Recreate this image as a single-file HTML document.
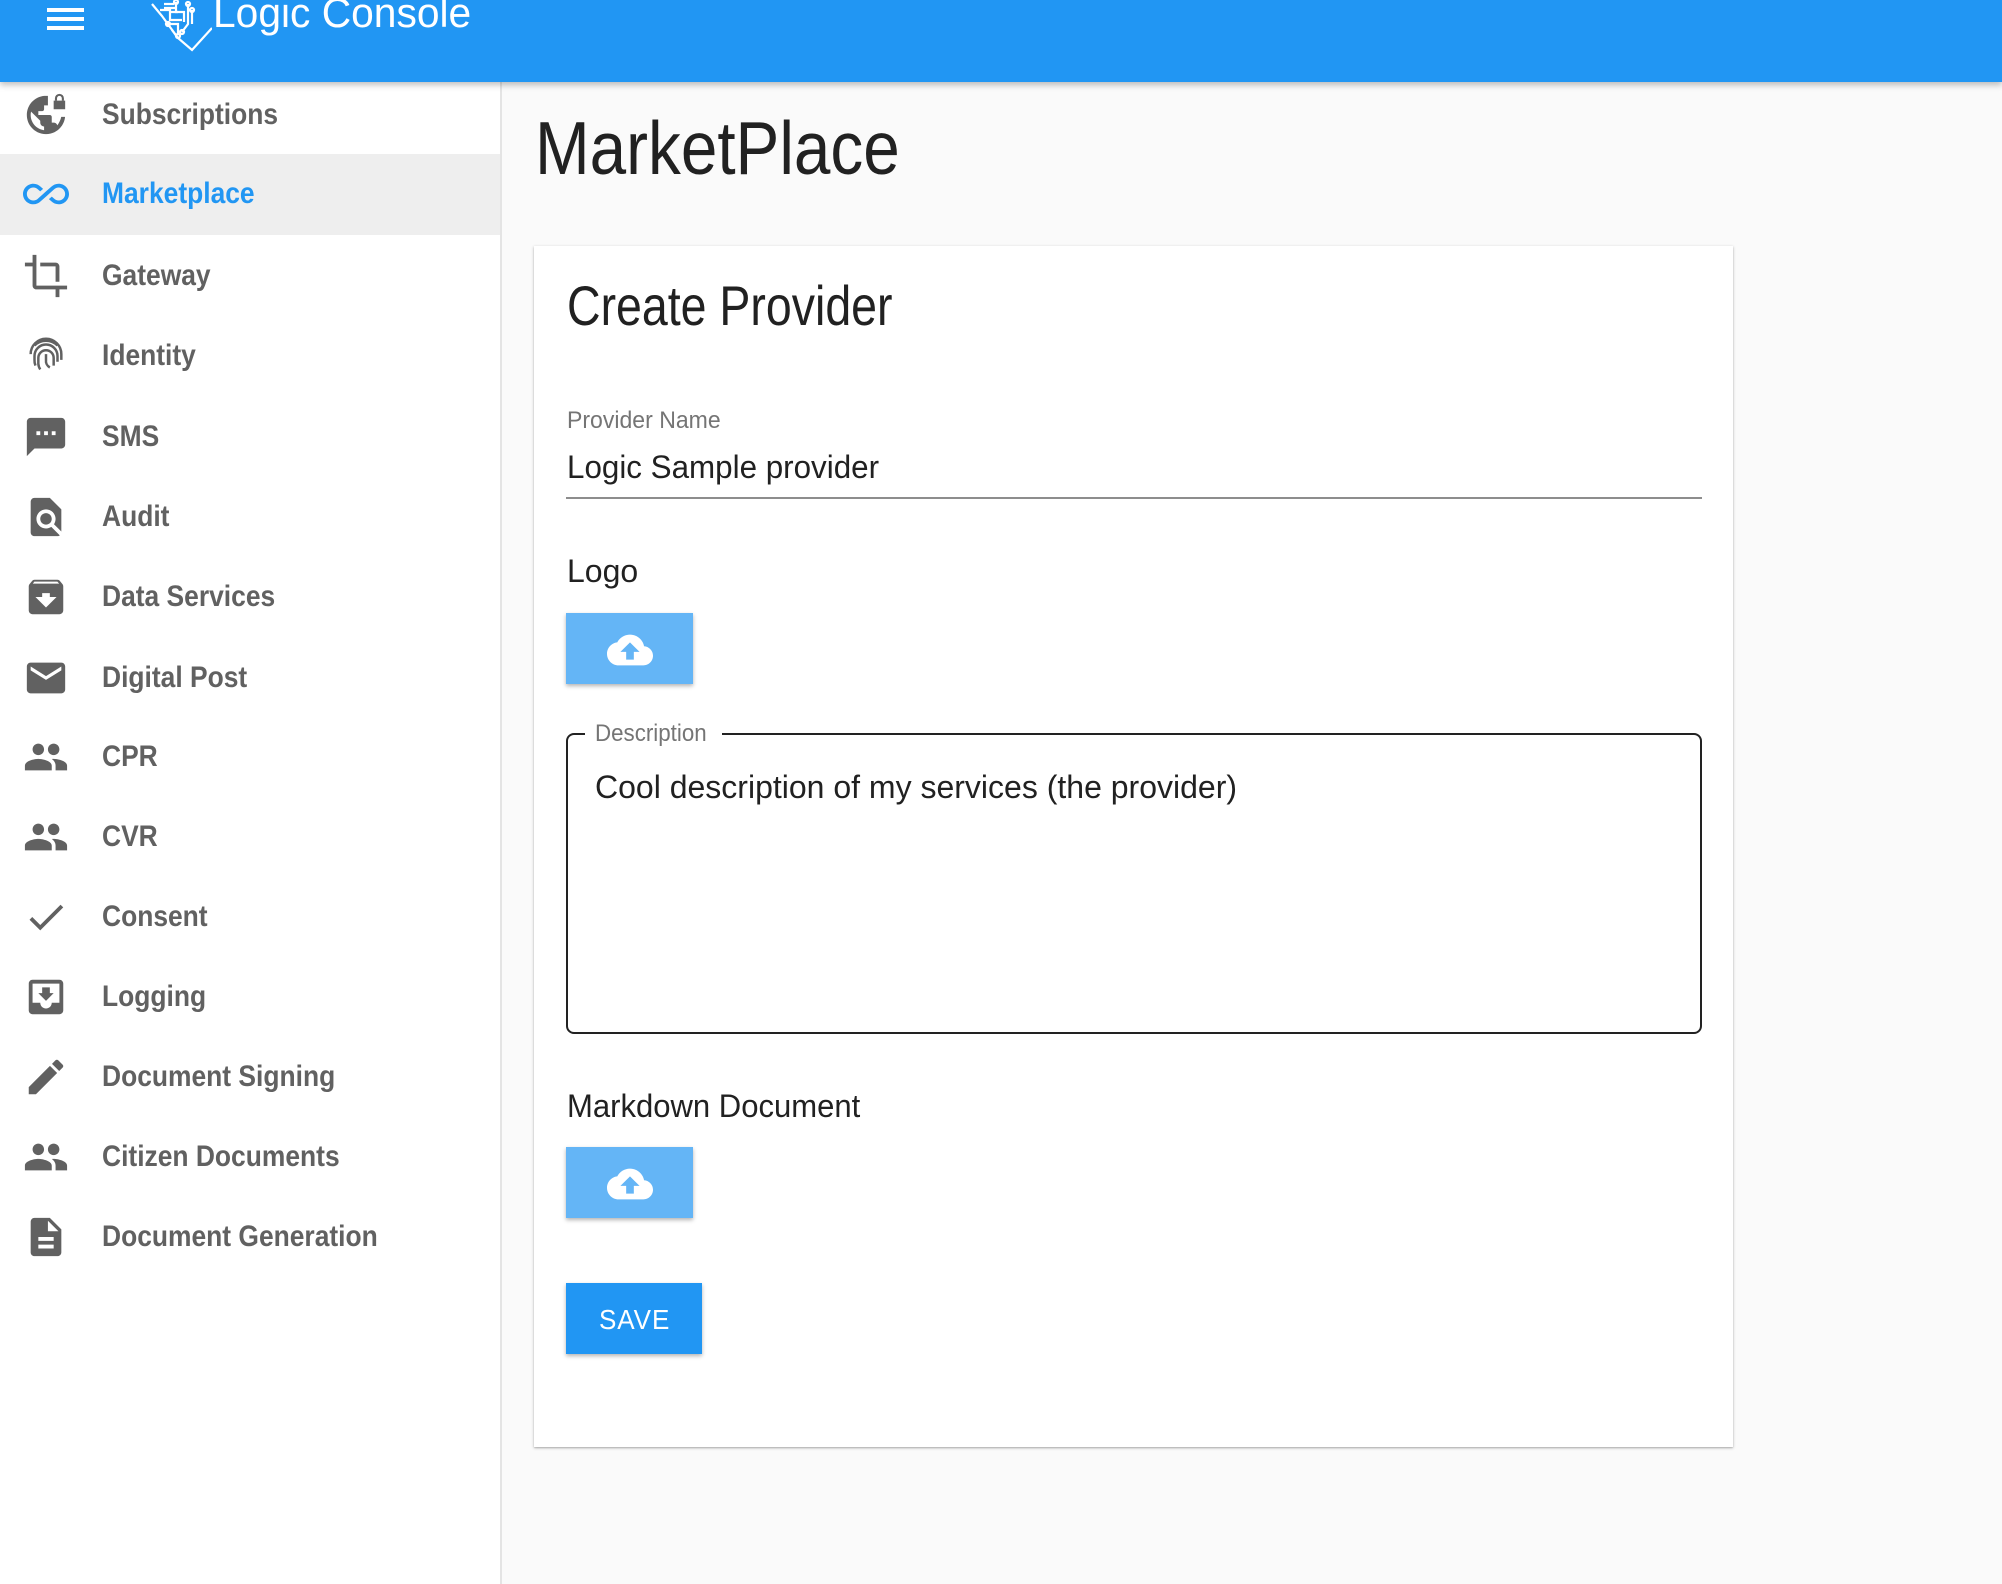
<!DOCTYPE html>
<html><head><meta charset="utf-8"><style>
*{margin:0;padding:0;box-sizing:border-box}
body{width:2002px;height:1584px;position:relative;overflow:hidden;background:#fafafa;font-family:"Liberation Sans",Arial,sans-serif}
.abs{position:absolute}
.t{position:absolute;white-space:nowrap;line-height:1;transform-origin:left center}
#hdr{left:0;top:0;width:2002px;height:82px;background:#2196f3;box-shadow:0 3px 6px rgba(0,0,0,.25);z-index:3}
#side{left:0;top:82px;width:502px;height:1502px;background:#fff;border-right:2px solid #e4e4e4}
.it{position:absolute;left:0;width:500px;height:80px}
.it svg{position:absolute;left:23px;top:17px;width:46px;height:46px;fill:#616161}
.it span{position:absolute;left:102px;top:25px;font-size:30px;font-weight:bold;color:#616161;line-height:1;transform:scaleX(.88);transform-origin:left center;white-space:nowrap}
#card{left:534px;top:246px;width:1199px;height:1201px;background:#fff;box-shadow:0 1px 3px rgba(0,0,0,.25),0 1px 1px rgba(0,0,0,.12)}
.up{position:absolute;left:566px;width:127px;height:71px;background:#64b5f6;box-shadow:0 2px 4px rgba(0,0,0,.3)}
.up svg{position:absolute;left:41px;top:14px;width:46px;height:46px;fill:#fff}
</style></head><body>
<div id="hdr" class="abs">
 <div class="abs" style="left:47px;top:8px;width:37px;height:4px;background:#fff"></div>
 <div class="abs" style="left:47px;top:17px;width:37px;height:4px;background:#fff"></div>
 <div class="abs" style="left:47px;top:26px;width:37px;height:4px;background:#fff"></div>
 <svg class="abs" style="left:148px;top:0" width="64" height="52" viewBox="0 0 64 52" fill="none" stroke="#fff" stroke-width="2.2">
  <path d="M4 4 L14 16 L30 38 L44 50 L64 28"/>
  <path d="M16 4 h10 M16 8 h12 M22 12 h8"/>
  <path d="M12 10 h10 v10 h12 M28 2 v10 h8 v10 M40 4 v20 l-6 8 M20 24 h10 v10 M44 10 v14 M24 30 l6 8"/>
  <circle cx="28" cy="2" r="2"/><circle cx="40" cy="4" r="2"/><circle cx="44" cy="10" r="2"/><circle cx="34" cy="32" r="2"/><circle cx="20" cy="24" r="2"/><circle cx="30" cy="36" r="2"/>
 </svg>
 <div class="t" style="left:213px;top:-8px;font-size:42px;color:#fff;transform:scaleX(.97)">Logic Console</div>
</div>

<div id="side" class="abs">
 <div class="it" style="top:-7px"><svg viewBox="0 0 24 24"><path d="M11 2.05C5.95 2.55 2 6.82 2 12c0 5.52 4.48 10 10 10 5.18 0 9.45-3.950 9.95-9h-2.02c-.3 1.6-1.05 3.05-2.03 4.39-.26-.81-1-1.39-1.9-1.39h-1v-3c0-.55-.45-1-1-1H8v-2h2c.55 0 1-.45 1-1V7h2V2.05zM11 19.93c-3.95-.49-7-3.85-7-7.93 0-.62.08-1.21.21-1.79L9 15v1c0 1.1.9 2 2 2v1.93z"/><path d="M16 4.5h6V9h-6z"/><path d="M17.2 4.5V3.3a1.8 1.8 0 0 1 3.6 0V4.5" fill="none" stroke="#616161" stroke-width="1.1"/></svg><span>Subscriptions</span></div>
 <div class="it" style="top:72px;height:81px;background:#eeeeee"><svg viewBox="0 0 24 24" style="fill:#2196f3"><path d="M18.6 6.62c-1.44 0-2.8.56-3.77 1.53L12 10.66 10.48 12h.01L7.8 14.39c-.64.64-1.49.99-2.4.99-1.87 0-3.39-1.51-3.39-3.38S3.53 8.62 5.4 8.62c.91 0 1.76.35 2.44 1.03l1.13 1 1.51-1.34L9.22 8.2C8.2 7.18 6.84 6.62 5.4 6.62 2.42 6.62 0 9.04 0 12s2.42 5.38 5.4 5.38c1.44 0 2.8-.56 3.77-1.53l2.83-2.5.01.01L13.52 12h-.01l2.69-2.39c.64-.64 1.49-.99 2.4-.99 1.87 0 3.39 1.51 3.39 3.38s-1.52 3.38-3.39 3.38c-.9 0-1.76-.35-2.44-1.03l-1.14-1.01-1.51 1.34 1.27 1.12c1.02 1.01 2.37 1.57 3.820 1.57 2.98 0 5.4-2.41 5.4-5.38s-2.42-5.37-5.4-5.37z"/></svg><span style="color:#2196f3">Marketplace</span></div>
 <div class="it" style="top:154px"><svg viewBox="0 0 24 24"><path d="M17 15h2V7c0-1.1-.9-2-2-2H9v2h8v8zM7 17V1H5v4H1v2h4v10c0 1.1.9 2 2 2h10v4h2v-4h4v-2H7z"/></svg><span>Gateway</span></div>
 <div class="it" style="top:234px"><svg viewBox="0 0 24 24" style="fill:none;stroke:#616161;stroke-width:1.3"><path d="M6 6.5a8.5 8.5 0 0 1 12 0"/><path d="M4 11a8 8 0 0 1 16 0v3"/><path d="M6.5 17a7 7 0 0 1-.5-3v-2a6 6 0 0 1 12 0v3"/><path d="M9 19a6 6 0 0 1-1-3v-3a4 4 0 0 1 8 0v4"/><path d="M12 11v3a4 4 0 0 0 2 4"/></svg><span>Identity</span></div>
 <div class="it" style="top:315px"><svg viewBox="0 0 24 24"><path d="M20 2H4c-1.1 0-1.99.9-1.99 2L2 22l4-4h14c1.1 0 2-.9 2-2V4c0-1.1-.9-2-2-2zM9 11H7V9h2v2zm4 0h-2V9h2v2zm4 0h-2V9h2v2z"/></svg><span>SMS</span></div>
 <div class="it" style="top:395px"><svg viewBox="0 0 24 24"><path d="M20 19.59V8l-6-6H6c-1.1 0-1.99.9-1.99 2L4 20c0 1.1.89 2 1.99 2H18c.45 0 .85-.15 1.19-.4l-4.43-4.43c-.8.52-1.74.83-2.76.83-2.76 0-5-2.24-5-5s2.24-5 5-5 5 2.24 5 5c0 1.02-.31 1.96-.83 2.75L20 19.59zM9 13c0 1.66 1.34 3 3 3s3-1.34 3-3-1.34-3-3-3-3 1.34-3 3z"/></svg><span>Audit</span></div>
 <div class="it" style="top:475px"><svg viewBox="0 0 24 24"><path d="M20.54 5.23l-1.39-1.68C18.88 3.21 18.47 3 18 3H6c-.47 0-.88.21-1.16.55L3.46 5.23C3.17 5.57 3 6.02 3 6.5V19c0 1.1.9 2 2 2h14c1.1 0 2-.9 2-2V6.5c0-.48-.17-.93-.46-1.27zM12 17.5L6.5 12H10v-2h4v2h3.5L12 17.5zM5.12 5l.81-1h12l.94 1H5.12z"/></svg><span>Data Services</span></div>
 <div class="it" style="top:556px"><svg viewBox="0 0 24 24"><path d="M20 4H4c-1.1 0-1.99.9-1.99 2L2 18c0 1.1.9 2 2 2h16c1.1 0 2-.9 2-2V6c0-1.1-.9-2-2-2zm0 4l-8 5-8-5V6l8 5 8-5v2z"/></svg><span>Digital Post</span></div>
 <div class="it" style="top:635px"><svg viewBox="0 0 24 24"><path d="M16 11c1.66 0 2.99-1.34 2.99-3S17.66 5 16 5c-1.66 0-3 1.34-3 3s1.34 3 3 3zm-8 0c1.66 0 2.99-1.34 2.99-3S9.66 5 8 5C6.34 5 5 6.34 5 8s1.34 3 3 3zm0 2c-2.33 0-7 1.17-7 3.5V19h14v-2.5c0-2.33-4.67-3.5-7-3.5zm8 0c-.29 0-.62.02-.97.05 1.16.84 1.97 1.97 1.97 3.45V19h6v-2.5c0-2.33-4.67-3.5-7-3.5z"/></svg><span>CPR</span></div>
 <div class="it" style="top:715px"><svg viewBox="0 0 24 24"><path d="M16 11c1.66 0 2.99-1.34 2.99-3S17.66 5 16 5c-1.66 0-3 1.34-3 3s1.34 3 3 3zm-8 0c1.66 0 2.99-1.34 2.99-3S9.66 5 8 5C6.34 5 5 6.34 5 8s1.34 3 3 3zm0 2c-2.33 0-7 1.17-7 3.5V19h14v-2.5c0-2.33-4.67-3.5-7-3.5zm8 0c-.29 0-.62.02-.97.05 1.16.84 1.97 1.97 1.97 3.45V19h6v-2.5c0-2.33-4.67-3.5-7-3.5z"/></svg><span>CVR</span></div>
 <div class="it" style="top:795px"><svg viewBox="0 0 24 24"><path d="M9 16.17L4.83 12l-1.42 1.41L9 19 21 7l-1.41-1.41z"/></svg><span>Consent</span></div>
 <div class="it" style="top:875px"><svg viewBox="0 0 24 24"><path d="M19 3H4.99c-1.11 0-1.98.9-1.98 2L3 19c0 1.1.88 2 1.99 2H19c1.1 0 2-.9 2-2V5c0-1.1-.9-2-2-2zm0 12h-4c0 1.66-1.35 3-3 3s-3-1.34-3-3H4.99V5H19v10zm-3-5h-2V7h-4v3H8l4 4 4-4z"/></svg><span>Logging</span></div>
 <div class="it" style="top:955px"><svg viewBox="0 0 24 24"><path d="M3 17.25V21h3.75L17.81 9.94l-3.75-3.75L3 17.25zM20.71 7.04c.39-.39.39-1.02 0-1.41l-2.34-2.34c-.39-.39-1.02-.39-1.41 0l-1.83 1.83 3.75 3.75 1.83-1.83z"/></svg><span>Document Signing</span></div>
 <div class="it" style="top:1035px"><svg viewBox="0 0 24 24"><path d="M16 11c1.66 0 2.99-1.34 2.99-3S17.66 5 16 5c-1.66 0-3 1.34-3 3s1.34 3 3 3zm-8 0c1.66 0 2.99-1.34 2.99-3S9.66 5 8 5C6.34 5 5 6.34 5 8s1.34 3 3 3zm0 2c-2.33 0-7 1.17-7 3.5V19h14v-2.5c0-2.33-4.67-3.5-7-3.5zm8 0c-.29 0-.62.02-.97.05 1.16.84 1.97 1.97 1.97 3.45V19h6v-2.5c0-2.33-4.67-3.5-7-3.5z"/></svg><span>Citizen Documents</span></div>
 <div class="it" style="top:1115px"><svg viewBox="0 0 24 24"><path d="M14 2H6c-1.1 0-1.99.9-1.99 2L4 20c0 1.1.89 2 1.99 2H18c1.1 0 2-.9 2-2V8l-6-6zm2 16H8v-2h8v2zm0-4H8v-2h8v2zm-3-5V3.5L18.5 9H13z"/></svg><span>Document Generation</span></div>
</div>

<div class="t" style="left:535px;top:111px;font-size:75px;color:#212121;transform:scaleX(.875)">MarketPlace</div>

<div id="card" class="abs"></div>
<div class="t" style="left:567px;top:278px;font-size:56px;color:#212121;transform:scaleX(.83)">Create Provider</div>
<div class="t" style="left:567px;top:409px;font-size:24px;color:#757575;transform:scaleX(.96)">Provider Name</div>
<div class="t" style="left:567px;top:451px;font-size:32px;color:#212121;transform:scaleX(.98)">Logic Sample provider</div>
<div class="abs" style="left:566px;top:497px;width:1136px;height:2px;background:#8d8d8d"></div>
<div class="t" style="left:567px;top:555px;font-size:32px;color:#212121">Logo</div>
<div class="up" style="top:613px"><svg viewBox="0 0 24 24"><path d="M19.35 10.04C18.67 6.59 15.64 4 12 4 9.11 4 6.6 5.64 5.35 8.04 2.34 8.36 0 10.91 0 14c0 3.31 2.69 6 6 6h13c2.76 0 5-2.24 5-5 0-2.64-2.05-4.78-4.65-4.96zM14 13v4h-4v-4H7l5-5 5 5h-3z"/></svg></div>

<div class="abs" style="left:566px;top:733px;width:1136px;height:301px;border:2px solid #222;border-radius:8px"></div>
<div class="abs" style="left:585px;top:725px;width:137px;height:14px;background:#fff"></div>
<div class="t" style="left:595px;top:722px;font-size:24px;color:#757575;transform:scaleX(.93)">Description</div>
<div class="t" style="left:595px;top:771px;font-size:32px;color:#212121">Cool description of my services (the provider)</div>

<div class="t" style="left:567px;top:1090px;font-size:32px;color:#212121;transform:scaleX(.97)">Markdown Document</div>
<div class="up" style="top:1147px"><svg viewBox="0 0 24 24"><path d="M19.35 10.04C18.67 6.59 15.64 4 12 4 9.11 4 6.6 5.64 5.35 8.04 2.34 8.36 0 10.91 0 14c0 3.31 2.69 6 6 6h13c2.76 0 5-2.24 5-5 0-2.64-2.05-4.78-4.65-4.96zM14 13v4h-4v-4H7l5-5 5 5h-3z"/></svg></div>

<div class="abs" style="left:566px;top:1283px;width:136px;height:71px;background:#2196f3;box-shadow:0 2px 4px rgba(0,0,0,.3)"></div>
<div class="t" style="left:599px;top:1306px;font-size:28px;color:#fff;letter-spacing:1px;transform:scaleX(.93)">SAVE</div>
</body></html>
